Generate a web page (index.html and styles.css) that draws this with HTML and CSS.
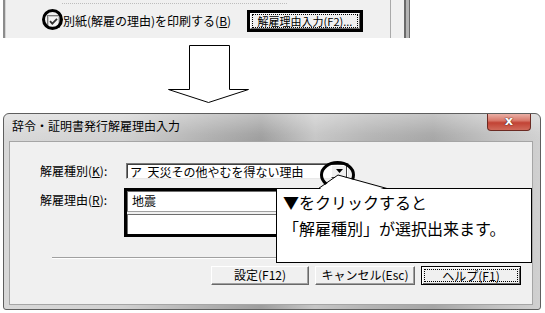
FILE: index.html
```html
<!DOCTYPE html>
<html lang="ja">
<head>
<meta charset="utf-8">
<title>辞令・証明書発行解雇理由入力</title>
<link rel="stylesheet" href="styles.css">
</head>
<body>
<div class="page">
  <div class="strip">
    <div class="strip-inner">
      <div class="groupline"></div>
      <div class="strip-row">
        <label class="chk">
          <svg class="chkbox" width="13" height="13" viewBox="0 0 13 13"><rect x="0.5" y="0.5" width="12" height="12" fill="#f4f4f4" stroke="#7a7a7a"/><rect x="1.5" y="1.5" width="10" height="10" fill="none" stroke="#c8c8c8"/><path d="M3 6.2 L5.3 8.6 L10 3.8" fill="none" stroke="#303030" stroke-width="1.8"/></svg>
          <span>別紙(解雇の理由)を印刷する(<u>B</u>)</span>
        </label>
        <div class="hl-btn"><div class="btn-sm"><span class="focus-sm">解雇理由入力(F2)...</span></div></div>
      </div>
    </div>
    <div class="strip-edge"></div>
    <div class="strip-edge2"></div>
  </div>

  <svg class="arrow" width="545" height="75" viewBox="0 0 545 75">
    <polygon points="189.5,7.5 229.5,7.5 229.5,51.5 248.5,51.5 208.5,64.5 168.5,51.5 189.5,51.5" fill="#fff" stroke="#000" stroke-width="1"/>
  </svg>

  <div class="dialog">
    <div class="titlebar">
      <span class="title">辞令・証明書発行解雇理由入力</span>
      <span class="close">x</span>
    </div>
    <div class="client">
      <div class="row1">
        <span class="lbl lbl1">解雇種別(<u>K</u>):</span>
        <div class="combo">
          <span class="combo-text">ア&nbsp;&nbsp;天災その他やむを得ない理由</span>
          <span class="dd"><svg width="7" height="4" viewBox="0 0 7 4"><polygon points="0,0 7,0 3.5,4" fill="#000"/></svg></span>
        </div>
      </div>
      <div class="row2">
        <span class="lbl lbl2">解雇理由(<u>R</u>):</span>
        <div class="hl-box">
          <div class="field">地震</div>
          <div class="field field2"></div>
        </div>
      </div>
      <div class="sep"></div>
      <div class="btns">
        <div class="btn b1">設定(F12)</div>
        <div class="btn b2">キャンセル(Esc)</div>
        <div class="btn b3 default"><span class="focus">ヘルプ(F1)</span></div>
      </div>
    </div>
  </div>

  <div class="ring ring-chk"></div>
  <div class="ring ring-dd"></div>
  <div class="callout">
    <div>▼をクリックすると</div>
    <div>「解雇種別」が選択出来ます。</div>
  </div>
  <svg class="pointer" width="72" height="19" viewBox="0 0 72 19">
    <polygon points="1.5,18 21,3 70,18" fill="#fff"/>
    <polyline points="1.5,16.5 21,3 70,16.5" fill="none" stroke="#000" stroke-width="1"/>
  </svg>
</div>
</body>
</html>
```

FILE: styles.css
```css
body {
  margin: 0;
  background: #fff;
  font-family: "Noto Sans CJK JP", "Noto Sans", sans-serif;
  font-size: 12px;
  color: #000;
}
.page {
  position: relative;
  width: 545px;
  height: 313px;
  overflow: hidden;
}

/* top strip */
.strip {
  display: flex;
  margin-left: 3px;
  height: 38px;
  border-left: 2px solid #8c8c8c;
}
.strip-inner {
  width: 384px;
  background: #f0f0f0;
  border-left: 1px solid #d4d4d4;
  display: flex;
  flex-direction: column;
}
.groupline {
  margin: 3px 0 0 56px;
  width: 225px;
  height: 0;
  border-top: 1px dotted #bdbdbd;
}
.strip-row {
  flex: 1;
  display: flex;
  align-items: center;
  padding-left: 41px;
}
.chk {
  display: flex;
  align-items: center;
  gap: 3px;
  width: 200px;
  line-height: 14px;
}
.chkbox { display: block; flex: none; }
.hl-btn {
  width: 116px;
  height: 22px;
  box-sizing: border-box;
  border: 3px solid #000;
  display: flex;
}
.btn-sm {
  flex: 1;
  background: #f0f0f0;
  border: 1px solid;
  border-color: #fff #6a6a6a #6a6a6a #fff;
  display: flex;
  padding: 0 1px;
}
.focus-sm {
  flex: 1;
  border: 1px dotted #000;
  font-size: 11px;
  line-height: 12px;
  text-align: center;
  white-space: nowrap;
}
.strip-edge {
  width: 13px;
  background: #f0f0f0;
  border-left: 1px solid #a9a9a9;
  border-right: 2px solid #6a6a6a;
}
.strip-edge2 {
  width: 3px;
  background: #b5b5b5;
  border-right: 1px solid #6a6a6a;
}

.arrow { display: block; }

/* dialog */
.dialog {
  margin-left: 3px;
  width: 538px;
  height: 197px;
  box-sizing: border-box;
  border: 1px solid #5e5e5e;
  border-radius: 6px 6px 3px 3px;
  padding: 0 7px 4px 5px;
  display: flex;
  flex-direction: column;
  background:
    linear-gradient(180deg, rgba(255,255,255,0.35) 0px, rgba(255,255,255,0.05) 20px, rgba(255,255,255,0) 27px),
    linear-gradient(90deg, #d8d8d8 0%, #d0d0d0 22%, #b0b0b0 38%, #9e9e9e 48%, #c6c6c6 58%, #b4b4b4 68%, #a6a6a6 80%, #c2c2c2 92%, #d0d0d0 100%);
}
.titlebar {
  height: 27px;
  flex: none;
  display: flex;
  justify-content: space-between;
  align-items: flex-start;
}
.title {
  margin: 4px 0 0 3px;
  line-height: 16px;
  font-size: 12px;
}
.close {
  width: 44px;
  height: 17px;
  box-sizing: border-box;
  margin-right: 2px;
  border: 1px solid #6b2a22;
  border-top: none;
  border-radius: 0 0 4px 4px;
  background: linear-gradient(180deg, #eab0a6 0%, #d97a6c 40%, #c24335 55%, #d06a5a 100%);
  color: #fff;
  font-family: "DejaVu Sans", sans-serif;
  font-weight: bold;
  font-size: 13px;
  line-height: 14px;
  text-align: center;
  text-shadow: 0 0 1px #3a1410, 0 0 1px #3a1410;
}
.client {
  flex: 1;
  background: #f0f0f0;
  border: 1px solid #a5a5a5;
  padding: 21px 0 0 30px;
  display: flex;
  flex-direction: column;
}
.row1 {
  display: flex;
  align-items: center;
  height: 16px;
}
.lbl { line-height: 16px; white-space: nowrap; }
.lbl1 { width: 86px; }
.lbl2 { width: 84px; padding-top: 4px; }
.combo {
  width: 223px;
  height: 16px;
  box-sizing: border-box;
  background: #fff;
  border: 1px solid;
  border-color: #7a7a7a #e8e8e8 #e8e8e8 #7a7a7a;
  box-shadow: inset 1px 1px #404040;
  display: flex;
  align-items: center;
  padding: 1px 1px 1px 3px;
}
.combo-text {
  flex: 1;
  line-height: 13px;
  white-space: nowrap;
}
.dd {
  width: 16px;
  height: 13px;
  box-sizing: border-box;
  background: #f0f0f0;
  border: 1px solid;
  border-color: #fff #404040 #404040 #fff;
  display: flex;
  align-items: center;
  justify-content: center;
}
.dd svg { display: block; }
.row2 {
  display: flex;
  margin-top: 9px;
}
.hl-box {
  width: 400px;
  height: 49px;
  box-sizing: border-box;
  border: 3px solid #000;
  display: flex;
  flex-direction: column;
}
.field {
  height: 21px;
  box-sizing: border-box;
  background: #fff;
  border-left: 1px solid #6e6e6e;
  border-top: 1px solid #6e6e6e;
  border-bottom: 1px solid #a0a0a0;
  padding-left: 4px;
  line-height: 17px;
}
.field2 {
  height: 20px;
  margin-top: 2px;
  border-bottom: none;
}
.sep {
  margin: 20px 12px 0 12px;
  height: 0;
  border-top: 1px solid #a0a0a0;
  border-bottom: 1px solid #fff;
}
.btns {
  display: flex;
  justify-content: flex-end;
  gap: 6px;
  margin-top: 7px;
  padding-right: 11px;
}
.btn {
  height: 19px;
  box-sizing: border-box;
  background: #f0f0f0;
  border: 1px solid;
  border-color: #fff #696969 #696969 #fff;
  box-shadow: inset -1px -1px #a0a0a0;
  text-align: center;
  line-height: 16px;
  white-space: nowrap;
}
.b1 { width: 98px; }
.b2 { width: 100px; }
.b3 { width: 100px; }
.default {
  border: 1px solid #000;
  box-shadow: inset 1px 1px #fff, inset -1px -1px #696969;
  display: flex;
  padding: 2px;
}
.focus {
  flex: 1;
  border: 1px dotted #000;
  line-height: 11px;
}

/* annotations */
.ring {
  position: absolute;
  box-sizing: border-box;
  border: 3px solid #000;
  border-radius: 50%;
}
.ring-chk { left: 42px; top: 9px; width: 21px; height: 21px; }
.ring-dd { left: 320px; top: 161px; width: 35px; height: 28px; }
.callout {
  position: absolute;
  left: 276px;
  top: 188px;
  width: 256px;
  height: 75px;
  box-sizing: border-box;
  border: 1px solid #000;
  background: #fff;
  padding-left: 6px;
  font-size: 16px;
  line-height: 26px;
  white-space: nowrap;
}
.pointer {
  position: absolute;
  left: 317px;
  top: 172px;
}
```
